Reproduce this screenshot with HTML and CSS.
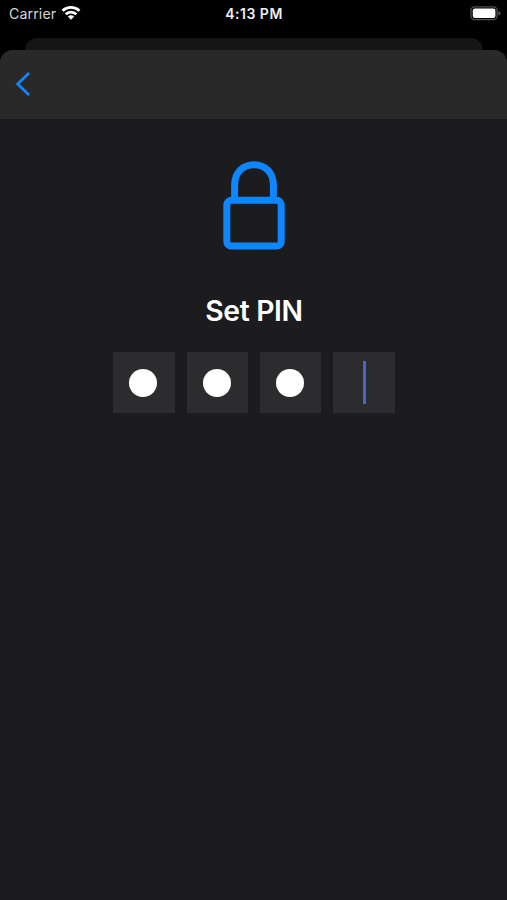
FILE: index.html
```html
<!DOCTYPE html>
<html lang="en">
<head>
<meta charset="utf-8">
<title>Set PIN</title>
<link rel="stylesheet" href="styles.css">
</head>
<body>
<header class="status">
  <div class="status-left">
    <span class="carrier">Carrier</span>
    <svg class="wifi" width="20" height="15" viewBox="0 0 20 15">
      <g fill="none" stroke="#fff" stroke-width="2.9">
        <path d="M1.6 5.7C6.3 1.2 13.7 1.2 18.4 5.7"/>
        <path d="M4.7 9.2C7.6 6.4 12.4 6.4 15.3 9.2"/>
      </g>
      <path fill="#fff" d="M10 14.7 6.8 11.5C8.6 9.9 11.4 9.9 13.2 11.5Z"/>
    </svg>
  </div>
  <span class="time">4:13 PM</span>
  <svg class="battery" width="31" height="15" viewBox="0 0 31 15">
    <rect x=".9" y=".9" width="26.2" height="12.8" rx="3.8" fill="none" stroke="#525252" stroke-width="1.3"/>
    <rect x="2.8" y="2.6" width="22.6" height="9.4" rx="2" fill="#fff"/>
    <path d="M28.4 5Q30.6 5.6 30.6 7.3T28.4 9.6Z" fill="#525252"/>
  </svg>
</header>
<div class="back-card"></div>
<main class="sheet">
  <nav class="nav">
    <svg width="16" height="26" viewBox="0 0 16 26">
      <path d="M13.3 2.7 2.6 13 13.3 23.3" fill="none" stroke="#1485fb" stroke-width="2.8" stroke-linecap="round" stroke-linejoin="miter"/>
    </svg>
  </nav>
  <section class="content">
    <svg class="lock" width="62" height="89" viewBox="0 0 62 89" fill="none" stroke="#0e86ff" stroke-width="7">
      <path d="M11.6 40V24C11.6 11.5 20 3.7 31 3.7S50.4 11.5 50.4 24V40"/>
      <rect x="3.8" y="39.3" width="54.4" height="45.7" rx="4.5"/>
    </svg>
    <h1 class="title">Set PIN</h1>
    <div class="pins">
      <div class="pin"><i class="dot"></i></div>
      <div class="pin"><i class="dot"></i></div>
      <div class="pin"><i class="dot"></i></div>
      <div class="pin"><i class="cursor"></i></div>
    </div>
  </section>
</main>
</body>
</html>
```
FILE: styles.css
```css
* { box-sizing: border-box; }
body {
  margin: 0;
  height: 900px;
  overflow: hidden;
  display: flex;
  flex-direction: column;
  background: #000;
  color: #fff;
  font-family: Inter, "Liberation Sans", sans-serif;
}
.status {
  height: 38px;
  flex: none;
  display: grid;
  grid-template-columns: 1fr auto 1fr;
  align-items: start;
  padding: 6px 6px 0 9px;
  font-size: 14px;
  line-height: 16px;
}
.status-left { display: flex; gap: 5px; }
.carrier { color: #d6d6d6; font-size: 14.2px; letter-spacing: .1px; }
.wifi { margin-top: -1px; }
.time { margin-left: -2px; font-weight: 600; font-size: 14px; letter-spacing: .5px; color: #eee; }
.battery { justify-self: end; }
.back-card {
  height: 12px;
  flex: none;
  margin: 0 24px 0 25px;
  border-radius: 12px 12px 0 0;
  background: #151515;
}
.sheet {
  flex: 1;
  border-radius: 13px 13px 0 0;
  overflow: hidden;
  background: #1c1c1e;
}
.nav {
  height: 69px;
  padding: 21px 15px;
  background: #292929;
}
.nav svg { display: block; }
.content {
  display: flex;
  flex-direction: column;
  align-items: center;
  padding: 42px 0 0 1px;
}
.lock { display: block; }
.title {
  margin: 43px 0 0;
  font-size: 28.3px;
  font-weight: 600;
  line-height: 36px;
  letter-spacing: -.35px;
}
.pins { display: flex; gap: 12px; margin-top: 23px; }
.pin {
  width: 61.4px;
  height: 61px;
  display: flex;
  align-items: center;
  justify-content: center;
  background: #2c2c2e;
}
.dot { width: 28px; height: 28px; margin-right: 1px; border-radius: 50%; background: #fff; }
.cursor { width: 3px; height: 43px; background: #4b65c5; }
```
